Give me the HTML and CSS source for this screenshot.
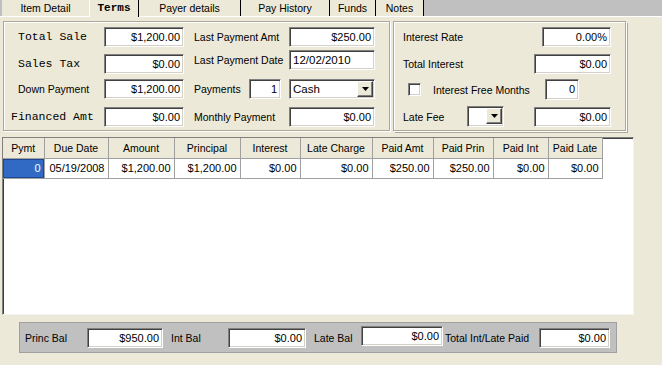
FILE: index.html
```html
<!DOCTYPE html>
<html lang="en">
<head>
  <meta charset="UTF-8" />
  <title>Terms</title>
  <link rel="stylesheet" href="styles.css">
</head>
<body>
  <div class="tabs">
    <div class="tab tab-item">Item Detail</div>
    <div class="tab tab-terms">Terms</div>
    <div class="tab tab-payer">Payer details</div>
    <div class="tab tab-history">Pay History</div>
    <div class="tab tab-funds">Funds</div>
    <div class="tab tab-notes">Notes</div>
  </div>

  <div class="groups">
    <div class="group group-sale">
      <div class="amounts">
        <span class="lbl lbl-mono">Total Sale</span>
        <div class="field">$1,200.00</div>
        <span class="lbl lbl-mono">Sales Tax</span>
        <div class="field">$0.00</div>
        <span class="lbl">Down Payment</span>
        <div class="field">$1,200.00</div>
        <span class="lbl lbl-mono lbl-wide">Financed Amt</span>
        <div class="field">$0.00</div>
      </div>
      <div class="payment">
        <span class="lbl">Last Payment Amt</span>
        <div class="field">$250.00</div>
        <span class="lbl">Last Payment Date</span>
        <div class="field field-left">12/02/2010</div>
        <div class="lbl lbl-payments">
          <span>Payments</span>
          <div class="field field-count">1</div>
        </div>
        <div class="select">
          <span class="select-text">Cash</span>
          <span class="drop"><svg width="7" height="4" viewBox="0 0 7 4"><polygon points="0,0 7,0 3.5,4" fill="#000"/></svg></span>
        </div>
        <span class="lbl">Monthly Payment</span>
        <div class="field">$0.00</div>
      </div>
    </div>

    <div class="group group-interest">
      <div class="irow">
        <span>Interest Rate</span>
        <div class="field field-rate">0.00%</div>
      </div>
      <div class="irow">
        <span>Total Interest</span>
        <div class="field field-money">$0.00</div>
      </div>
      <div class="irow irow-tall">
        <span class="check"></span>
        <span class="check-label">Interest Free Months</span>
        <div class="field field-months">0</div>
      </div>
      <div class="irow irow-tall">
        <span class="fee-label">Late Fee</span>
        <div class="select select-fee">
          <span class="select-text"></span>
          <span class="drop"><svg width="7" height="4" viewBox="0 0 7 4"><polygon points="0,0 7,0 3.5,4" fill="#000"/></svg></span>
        </div>
        <div class="field field-money">$0.00</div>
      </div>
    </div>
  </div>

  <div class="grid">
    <table>
      <colgroup>
        <col style="width:41px"><col style="width:64px"><col style="width:66px"><col style="width:66px"><col style="width:60px">
        <col style="width:72px"><col style="width:61px"><col style="width:60px"><col style="width:55px"><col style="width:54px">
      </colgroup>
      <thead>
        <tr>
          <th>Pymt</th><th>Due Date</th><th>Amount</th><th>Principal</th><th>Interest</th>
          <th>Late Charge</th><th>Paid Amt</th><th>Paid Prin</th><th>Paid Int</th><th>Paid Late</th>
        </tr>
      </thead>
      <tbody>
        <tr>
          <td class="selected">0</td><td>05/19/2008</td><td>$1,200.00</td><td>$1,200.00</td><td>$0.00</td>
          <td>$0.00</td><td>$250.00</td><td>$250.00</td><td>$0.00</td><td>$0.00</td>
        </tr>
      </tbody>
    </table>
  </div>

  <div class="balances">
    <span class="bal-label bal-first">Princ Bal</span>
    <div class="field">$950.00</div>
    <span class="bal-label">Int Bal</span>
    <div class="field">$0.00</div>
    <span class="bal-label">Late Bal</span>
    <div class="field field-late">$0.00</div>
    <span class="bal-label bal-last">Total Int/Late Paid</span>
    <div class="field">$0.00</div>
  </div>
</body>
</html>
```

FILE: styles.css
```css
* {
  box-sizing: border-box;
}
html, body {
  margin: 0;
}
body {
  width: 662px;
  height: 365px;
  overflow: hidden;
  background: #ece9d8;
  font-family: "Liberation Sans", Arial, sans-serif;
  font-size: 10.5px;
  color: #000;
}

/* tab strip */
.tabs {
  display: flex;
  height: 17px;
  padding-left: 2px;
  background: #c0c0c0;
  border-bottom: 1px solid #fff;
}
.tab {
  height: 16px;
  line-height: 16px;
  text-align: center;
  background: #ece9d8;
  border-right: 1px solid #000;
}
.tab-item { width: 87px; border-right: none; }
.tab-terms {
  width: 50px;
  height: 17px;
  border-left: 1px solid #fff;
  font-family: "Liberation Mono", monospace;
  font-weight: bold;
  font-size: 11px;
}
.tab-payer { width: 102px; }
.tab-history { width: 89px; }
.tab-funds { width: 46px; }
.tab-notes { width: 48px; }

/* framed groups */
.groups {
  display: flex;
  gap: 3px;
  margin-top: 4px;
  padding-left: 3px;
}
.group {
  height: 110px;
  border: 1px solid #aca899;
  box-shadow: inset 1px 1px 0 #fff, 1px 1px 0 #fff;
}
.group-sale {
  width: 387px;
  display: flex;
}
.group-interest {
  width: 233px;
  display: grid;
  grid-template-rows: 27px 25px 27px 21px;
  padding: 5px 14px 0 9px;
  box-shadow: inset 1px 1px 0 #fff, 1px 1px 0 #fff, 2px 2px 0 #aca899;
}

.amounts {
  display: grid;
  grid-template-columns: 100px 80px;
  grid-template-rows: 27px 25px 28px 20px;
  padding-top: 5px;
}
.payment {
  display: grid;
  grid-template-columns: 105px 86px;
  grid-template-rows: 23px 29px 28px 20px;
  padding-top: 5px;
}
.lbl {
  line-height: 20px;
  padding-left: 14px;
  white-space: nowrap;
}
.payment .lbl { padding-left: 10px; }
.lbl-mono {
  font-family: "Liberation Mono", monospace;
  font-size: 11.5px;
}
.lbl-wide { padding-left: 7px; }
.lbl-payments {
  display: flex;
  align-items: center;
  justify-content: space-between;
  align-self: start;
  height: 20px;
  padding-right: 8px;
}

/* edit boxes */
.field {
  height: 20px;
  padding-right: 3px;
  background: #fff;
  border: 1px solid;
  border-color: #808080 #fff #fff #808080;
  box-shadow: inset 1px 1px 0 #404040, inset -1px -1px 0 #d4d0c8;
  font-size: 11px;
  line-height: 18px;
  text-align: right;
  white-space: nowrap;
}
.field-left {
  text-align: left;
  padding-left: 3px;
  font-size: 11.5px;
}
.field-count { width: 32px; }
.field-rate { width: 69px; margin-left: auto; }
.field-money { width: 77px; margin-left: auto; }
.field-months { width: 34px; margin-left: auto; margin-right: 32px; height: 21px; }

.select {
  display: flex;
  height: 20px;
  background: #fff;
  border: 1px solid;
  border-color: #808080 #fff #fff #808080;
  box-shadow: inset 1px 1px 0 #404040, inset -1px -1px 0 #d4d0c8;
}
.select-text {
  flex: 1;
  padding-left: 3px;
  font-size: 11.5px;
  line-height: 18px;
}
.drop {
  display: flex;
  align-items: center;
  justify-content: center;
  width: 16px;
  height: 16px;
  margin: 1px;
  background: #ece9d8;
  border: 1px solid;
  border-color: #fff #404040 #404040 #fff;
  box-shadow: inset -1px -1px 0 #808080;
}
.select-fee { width: 37px; height: 21px; }

.irow {
  display: flex;
  align-items: center;
  height: 20px;
}
.irow-tall { height: 21px; }
.check {
  width: 13px;
  height: 13px;
  margin-left: 5px;
  background: #fff;
  border: 1px solid;
  border-color: #808080 #fff #fff #808080;
  box-shadow: inset 1px 1px 0 #404040, inset -1px -1px 0 #d4d0c8;
}
.check-label { margin-left: 12px; }
.fee-label { width: 64px; }

/* payment grid */
.grid {
  width: 632px;
  height: 178px;
  margin: 6px 0 0 2px;
  background: #fff;
  border: 1px solid;
  border-color: #808080 #f4f4f4 #f4f4f4 #808080;
  box-shadow: inset 1px 1px 0 #404040;
}
table {
  width: 599px;
  border-collapse: collapse;
  table-layout: fixed;
}
th, td {
  height: 20px;
  padding: 0 3px;
  border: 1px solid #a0a0a0;
  white-space: nowrap;
  overflow: hidden;
}
th {
  background: #ece9d8;
  font-weight: normal;
  font-size: 10.5px;
  text-align: center;
  border-top: none;
  border-left: none;
}
td {
  font-size: 11px;
  text-align: right;
  border-left: none;
}
td.selected {
  background: #316ac5;
  color: #fff;
  box-shadow: inset 0 0 0 1px #1f4690;
}

/* balance bar */
.balances {
  display: grid;
  grid-template-columns: 62px 76px 65px 78px 55px 82px 96px 71px;
  align-items: center;
  width: 598px;
  height: 31px;
  margin: 7px 0 0 19px;
  padding-left: 5px;
  background: #c0c0c0;
  border: 1px solid #a0a0a0;
}
.bal-label {
  padding-left: 8px;
  white-space: nowrap;
}
.bal-first { padding-left: 0; }
.bal-last { padding-left: 2px; }
.field-late { margin-bottom: 4px; }
```
